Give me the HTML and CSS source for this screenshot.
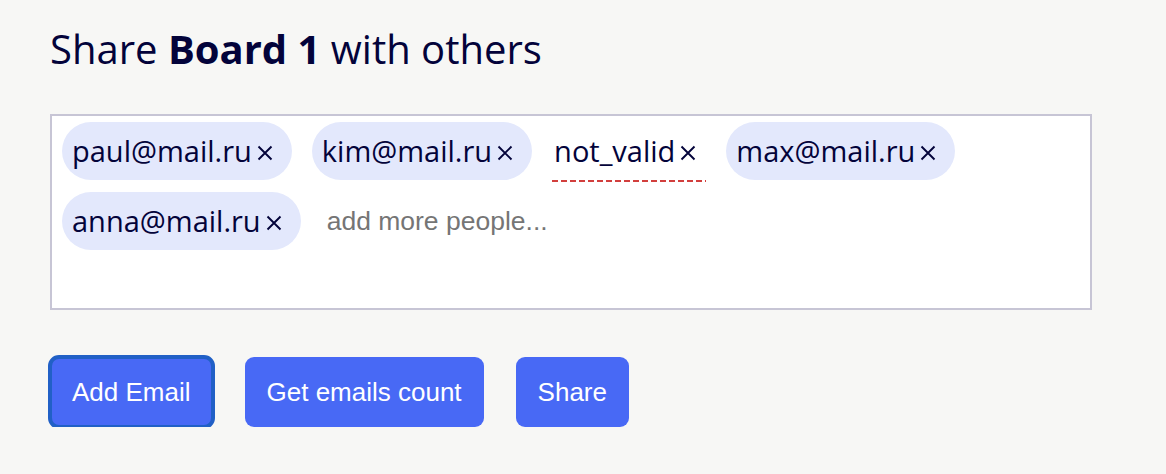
FILE: index.html
```html
<!DOCTYPE html>
<html lang="en">
<head>
<meta charset="utf-8">
<title>Share Board 1</title>
<link rel="stylesheet" href="styles.css">
</head>
<body>
<main class="page">
  <h1 class="title">Share <b>Board 1</b> with others</h1>
  <div class="emails-box">
    <span class="chip">paul@mail.ru<span class="chip-remove" title="Remove"><svg viewBox="0 0 16 16"><path d="M1.5 1.5 14.5 14.5M14.5 1.5 1.5 14.5"/></svg></span></span>
    <span class="chip">kim@mail.ru<span class="chip-remove" title="Remove"><svg viewBox="0 0 16 16"><path d="M1.5 1.5 14.5 14.5M14.5 1.5 1.5 14.5"/></svg></span></span>
    <span class="chip chip-invalid">not_valid<span class="chip-remove" title="Remove"><svg viewBox="0 0 16 16"><path d="M1.5 1.5 14.5 14.5M14.5 1.5 1.5 14.5"/></svg></span></span>
    <span class="chip">max@mail.ru<span class="chip-remove" title="Remove"><svg viewBox="0 0 16 16"><path d="M1.5 1.5 14.5 14.5M14.5 1.5 1.5 14.5"/></svg></span></span>
    <span class="chip">anna@mail.ru<span class="chip-remove" title="Remove"><svg viewBox="0 0 16 16"><path d="M1.5 1.5 14.5 14.5M14.5 1.5 1.5 14.5"/></svg></span></span>
    <input class="emails-input" type="text" placeholder="add more people...">
  </div>
  <div class="actions">
    <button class="btn btn-focus" type="button">Add Email</button>
    <button class="btn" type="button">Get emails count</button>
    <button class="btn" type="button">Share</button>
  </div>
</main>
</body>
</html>
```
FILE: styles.css
```css
html, body {
  margin: 0;
  padding: 0;
  background: #f7f7f5;
}

.page {
  padding: 21px 50px 0;
  font-family: "Open Sans", "Liberation Sans", sans-serif;
  color: #03033a;
}

.title {
  margin: 0;
  font-size: 40px;
  font-weight: 400;
  line-height: 55px;
}

.title b {
  font-weight: 700;
}

.emails-box {
  box-sizing: border-box;
  width: 1042px;
  height: 196px;
  margin-top: 38px;
  border: 2px solid #c7c5d5;
  background: #ffffff;
  display: flex;
  flex-wrap: wrap;
  align-content: flex-start;
  align-items: center;
}

.chip {
  display: inline-flex;
  align-items: center;
  height: 38px;
  margin: 6px 10px;
  padding: 10px 19px 10px 10px;
  border-radius: 29px;
  background: #e3e8fc;
  font-size: 29px;
  line-height: 38px;
  color: #03033a;
}

.chip-remove {
  display: inline-flex;
  margin-left: 5px;
  margin-top: 3px;
  cursor: pointer;
}

.chip-remove svg {
  width: 16px;
  height: 16px;
  fill: none;
  stroke: #03033a;
  stroke-width: 1.9;
}

.chip-invalid {
  background: transparent;
  border-radius: 0;
  margin-bottom: 4px;
  padding: 10px 10px 10px 2px;
  border-bottom: 2px solid transparent;
  background-image: repeating-linear-gradient(to right, #d23f3d 0 6px, transparent 6px 9px);
  background-size: 100% 2px;
  background-position: left bottom;
  background-repeat: no-repeat;
  background-origin: border-box;
}

.emails-input {
  flex: 1;
  min-width: 200px;
  margin: 6px 0;
  padding: 0 16px;
  border: 0;
  outline: none;
  background: transparent;
  font-family: "Liberation Sans", Arial, sans-serif;
  font-size: 26.5px;
  line-height: 38px;
  color: #03033a;
}

.emails-input::placeholder {
  color: #757575;
}

.actions {
  display: flex;
  gap: 32px;
  margin-top: 47px;
}

.btn {
  padding: 20px 22px;
  border: 0;
  border-radius: 9px;
  background: #4869f5;
  color: #ffffff;
  font-family: "Liberation Sans", Arial, sans-serif;
  font-size: 26px;
  line-height: 30px;
  cursor: pointer;
}

.btn-focus {
  outline: 3px solid #2160c6;
  outline-offset: -1px;
  box-shadow: inset 0 0 0 2px #2160c6;
}
```
